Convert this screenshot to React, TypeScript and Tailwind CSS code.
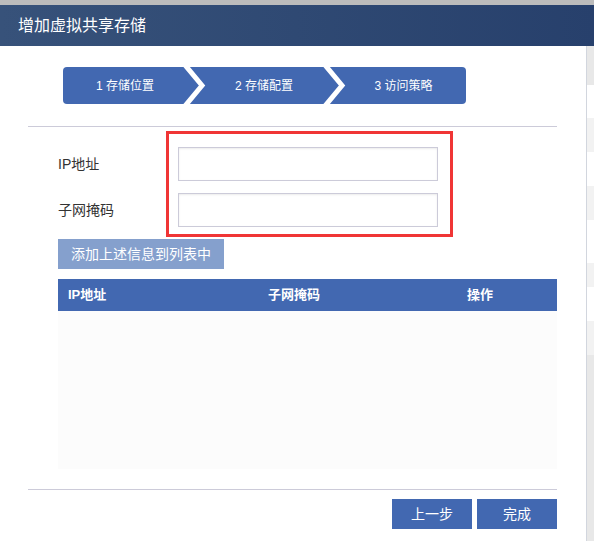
import React from "react";

const font = { fontFamily: '"Liberation Sans", "Noto Sans CJK SC", sans-serif' };

function StepBar() {
  return (
    <div className="relative ml-[63px] mt-[21px] flex h-[37px] w-[403px] items-center rounded-[4px] bg-[#4268b1] text-[12px] text-white">
      <div className="flex w-[124px] justify-center">1 存储位置</div>
      <div className="ml-[13px] flex w-[128px] justify-center">2 存储配置</div>
      <div className="ml-[13px] flex flex-1 justify-center">3 访问策略</div>
      <svg
        className="absolute left-0 top-0"
        width="403"
        height="37"
        viewBox="0 0 403 37"
        fill="none"
        aria-hidden="true"
      >
        <path d="M122 -2 L139 18.5 L122 39" stroke="#ffffff" strokeWidth="5" />
        <path d="M262 -2 L279 18.5 L262 39" stroke="#ffffff" strokeWidth="5" />
      </svg>
    </div>
  );
}

function SideStrip() {
  const bands = [
    "h-[39px] bg-[#e8e8e8]",
    "h-[33px] bg-white",
    "h-[34px] bg-[#f2f2f2]",
    "h-[34px] bg-white",
    "h-[34px] bg-[#f2f2f2]",
    "h-[43px] bg-white",
    "h-[24px] bg-[#f2f2f2]",
    "h-[34px] bg-white",
    "h-[34px] bg-[#f2f2f2]",
    "flex-1 bg-[#e8e8e8]",
  ];
  return (
    <div className="flex w-[7px] flex-col">
      {bands.map((b, i) => (
        <div key={i} className={b} />
      ))}
    </div>
  );
}

export default function App() {
  return (
    <div className="flex h-[541px] w-[594px] flex-col overflow-hidden bg-white" style={font}>
      <div className="h-[5px] bg-[#bcbcbc]" />
      <div className="flex h-[41px] items-center bg-gradient-to-r from-[#37527a] to-[#27406c] pl-[18px] text-[16px] text-white">
        增加虚拟共享存储
      </div>
      <div className="flex flex-1">
        <div className="flex w-[587px] flex-col border-r border-[#d2d6de]">
          <StepBar />
          <div className="ml-[28px] mt-[22px] h-px w-[529px] bg-[#cccbd9]" />

          <div className="mt-[4px] flex">
            <div className="ml-[58px] flex w-[108px] flex-col pt-[16px] text-[14px] text-[#333333]">
              <div className="flex h-[34px] items-center">IP地址</div>
              <div className="mt-[12px] flex h-[34px] items-center">子网掩码</div>
            </div>
            <div className="flex h-[106px] w-[287px] flex-col border-[3px] border-[#f03535] pl-[9px] pt-[13px]">
              <input className="h-[34px] w-[260px] border border-[#cccbd9] bg-white shadow-[inset_0_1px_2px_rgba(0,0,0,0.08)] outline-none" />
              <input className="mt-[12px] h-[34px] w-[260px] border border-[#cccbd9] bg-white shadow-[inset_0_1px_2px_rgba(0,0,0,0.08)] outline-none" />
            </div>
          </div>

          <button className="ml-[58px] mt-[2px] flex h-[30px] w-[166px] items-center justify-center bg-[#85a0cd] text-[14px] text-white">
            添加上述信息到列表中
          </button>

          <div className="ml-[58px] mt-[10px] w-[499px]">
            <div className="flex h-[32px] items-center bg-[#4268b1] text-[13px] font-bold text-white">
              <div className="w-[200px] pl-[10px]">IP地址</div>
              <div className="w-[200px] pl-[10px]">子网掩码</div>
              <div className="flex-1 pl-[9px]">操作</div>
            </div>
            <div className="h-[158px] bg-[#fcfcfc]" />
          </div>

          <div className="ml-[28px] mt-[20px] h-px w-[529px] bg-[#cccbd9]" />

          <div className="ml-[392px] mt-[9px] flex gap-[5px] text-[14px] text-white">
            <button className="flex h-[30px] w-[80px] items-center justify-center bg-[#4268b1]">
              上一步
            </button>
            <button className="flex h-[30px] w-[80px] items-center justify-center bg-[#4268b1]">
              完成
            </button>
          </div>
        </div>
        <SideStrip />
      </div>
    </div>
  );
}
